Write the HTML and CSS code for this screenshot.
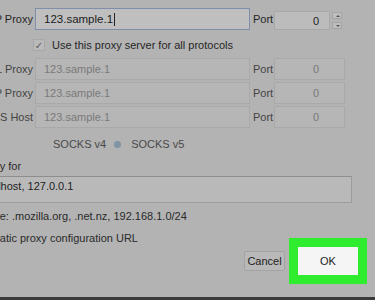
FILE: index.html
```html
<!DOCTYPE html>
<html lang="en">
<head>
    <meta charset="UTF-8">
    <meta name="viewport" content="width=device-width, initial-scale=1.0">
    <title>Connection Settings</title>
    <link rel="stylesheet" href="styles.css">
</head>
<body>
    <div class="dialog">
        <div class="proxy-grid">
            <span class="lbl strong">HTTP Proxy</span>
            <div class="field focus">123.sample.1<span class="caret"></span></div>
            <span class="port-lbl strong">Port</span>
            <div class="port-wrap">
                <div class="port">0</div>
                <div class="stepper"><span class="step up"></span><span class="step down"></span></div>
            </div>

            <label class="share"><span class="check">&#10003;</span>Use this proxy server for all protocols</label>

            <span class="lbl">SSL Proxy</span>
            <div class="field off">123.sample.1</div>
            <span class="port-lbl">Port</span>
            <div class="port off">0</div>

            <span class="lbl">FTP Proxy</span>
            <div class="field off">123.sample.1</div>
            <span class="port-lbl">Port</span>
            <div class="port off">0</div>

            <span class="lbl">SOCKS Host</span>
            <div class="field off">123.sample.1</div>
            <span class="port-lbl">Port</span>
            <div class="port off">0</div>

            <div class="socks">
                <span>SOCKS v4</span>
                <span class="radio"></span>
                <span>SOCKS v5</span>
            </div>
        </div>

        <div class="noproxy">
            <p class="np-lbl">No Proxy for</p>
            <div class="np-box">localhost, 127.0.0.1</div>
            <p class="hint">Example: .mozilla.org, .net.nz, 192.168.1.0/24</p>
            <p class="auto">Automatic proxy configuration URL</p>
        </div>

        <div class="actions">
            <button class="btn">Cancel</button>
            <button class="btn ok">OK</button>
        </div>
    </div>
    <div class="dock"></div>
</body>
</html>
```

FILE: styles.css
```css
body {
    margin: 0;
    height: 300px;
    overflow: hidden;
    background: #b3b3b3;
    font-family: "Liberation Sans", Arial, sans-serif;
    font-size: 11px;
    color: #2a2a2a;
}
.dialog {
    margin-left: -58px;
    width: 433px;
    padding-top: 8px;
}
.proxy-grid {
    display: grid;
    grid-template-columns: 93px 215px 24px 71px;
    grid-template-rows: 22px 24px 22px 22px 22px 28px;
    row-gap: 2px;
}
.lbl {
    display: flex;
    align-items: center;
    justify-content: flex-end;
    padding-right: 2px;
    white-space: nowrap;
    color: #444;
}
.port-lbl {
    display: flex;
    align-items: center;
    padding-left: 3px;
    color: #444;
}
.strong {
    color: #262626;
}
.field {
    display: flex;
    align-items: center;
    box-sizing: border-box;
    padding-left: 8px;
    border: 1px solid #a9a9a9;
    background: #b6b6b6;
}
.field.focus {
    border-color: #7f8eaa;
    background: #bfbfbf;
    color: #1c1c1c;
    font-size: 11.5px;
}
.field.off, .port.off {
    color: #7a7a7a;
}
.caret {
    width: 1px;
    height: 13px;
    margin-left: 1px;
    background: #222;
}
.port-wrap {
    display: flex;
    align-items: center;
}
.port {
    display: flex;
    align-items: center;
    justify-content: flex-end;
    box-sizing: border-box;
    height: 22px;
    border: 1px solid #a9a9a9;
    background: #b6b6b6;
    padding-right: 25px;
}
.port-wrap .port {
    width: 56px;
    height: 19px;
    margin-top: 3px;
    padding-right: 10px;
    background: #bcbcbc;
    color: #1c1c1c;
}
.stepper {
    display: flex;
    flex-direction: column;
    gap: 3px;
    margin-left: 2px;
    margin-top: 3px;
}
.step {
    position: relative;
    width: 10px;
    height: 7px;
    background: #bdbdbd;
    border: 1px solid #a5a5a5;
    box-sizing: border-box;
}
.step::after {
    content: "";
    position: absolute;
    left: 3px;
    top: 2px;
    border-left: 2px solid transparent;
    border-right: 2px solid transparent;
}
.up::after {
    border-bottom: 2px solid #555;
}
.down::after {
    border-top: 2px solid #555;
}
.share {
    grid-column: 2 / 5;
    display: flex;
    align-items: center;
    gap: 7px;
    margin-left: -2px;
    margin-top: 2px;
    color: #262626;
}
.check {
    display: flex;
    align-items: center;
    justify-content: center;
    width: 12px;
    height: 12px;
    box-sizing: border-box;
    border: 1px solid #a7a7a7;
    background: #bababa;
    color: #5a5a5a;
    font-size: 10px;
    font-family: "DejaVu Sans", sans-serif;
}
.socks {
    grid-column: 2 / 5;
    display: flex;
    align-items: center;
    padding-left: 18px;
    color: #4a4a4a;
}
.radio {
    width: 7px;
    height: 7px;
    margin: 0 10px 0 8px;
    border-radius: 50%;
    background: #7f95a6;
}
.noproxy {
    margin-left: 18px;
}
.noproxy p {
    margin: 0;
    line-height: 14px;
    white-space: nowrap;
}
.np-lbl {
    padding-top: 1px;
}
.np-box {
    box-sizing: border-box;
    width: 379px;
    height: 27px;
    margin: 3px 0 0 13px;
    padding: 3px 0 0 4px;
    line-height: 13px;
    border: 1px solid #9c9c9c;
    border-top-color: #8e8e8e;
    background: #b9b9b9;
    color: #1e1e1e;
}
.noproxy .hint {
    margin: 6px 0 0 3px;
}
.noproxy .auto {
    margin: 8px 0 0 8px;
}
.actions {
    display: flex;
    justify-content: flex-end;
    align-items: center;
    gap: 13px;
    margin-top: 2px;
    padding-right: 17px;
}
.btn {
    width: 41px;
    height: 20px;
    padding: 0;
    border: 1px solid #a3a3a3;
    border-radius: 2px;
    background: #b9b9b9;
    font-family: inherit;
    font-size: 11px;
    color: #222;
}
.btn.ok {
    width: 60px;
    height: 28px;
    border: none;
    border-radius: 0;
    background: #f5f5f5;
    outline: 9px solid #2fec2f;
}
.dock {
    margin-top: 22px;
    height: 10px;
    background: #3b3b3b;
}
```
